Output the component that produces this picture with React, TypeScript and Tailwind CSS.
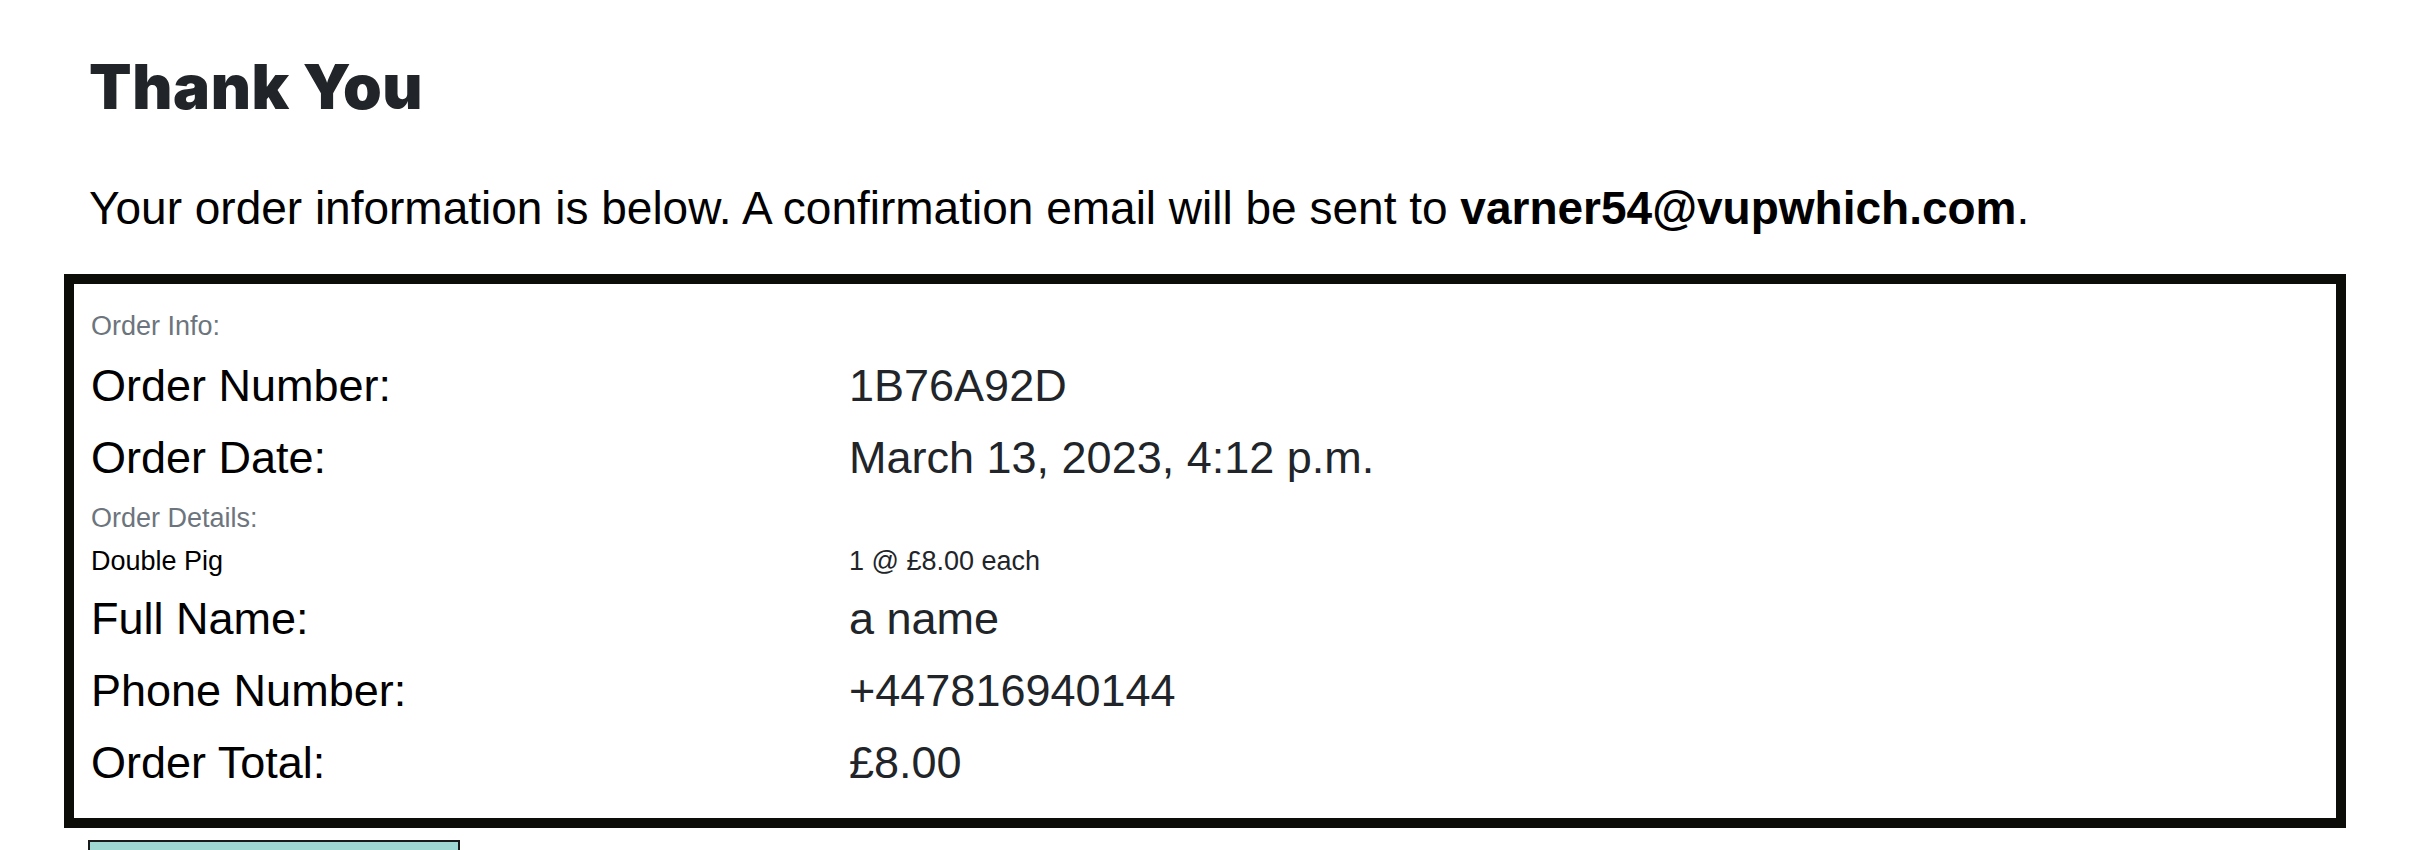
import React from "react";

const sans = { fontFamily: '"Liberation Sans", Arial, sans-serif' };

function BigRow({ label, value }: { label: string; value: string }) {
  return (
    <>
      <div className="h-[72px] text-[45px] leading-[72px] text-black">{label}</div>
      <div className="h-[72px] text-[45px] leading-[72px] text-[#212529]">{value}</div>
    </>
  );
}

function OrderBox() {
  return (
    <div className="mt-[39px] border-[10px] border-[#0c0d09] pt-[23px] pb-[19px] pl-[17px]">
      <div className="grid grid-cols-[758px_1fr]">
        <div className="col-span-2 mb-[5px] h-[38px] text-[27px] leading-[38px] text-[#6c757d]">
          Order Info:
        </div>
        <BigRow label="Order Number:" value="1B76A92D" />
        <BigRow label="Order Date:" value="March 13, 2023, 4:12 p.m." />
        <div className="col-span-2 mt-[5px] mb-[5px] h-[38px] text-[27px] leading-[38px] text-[#6c757d]">
          Order Details:
        </div>
        <div className="h-[41px] text-[27px] leading-[38px] text-black">Double Pig</div>
        <div className="h-[41px] text-[27px] leading-[38px] text-[#212529]">1 @ £8.00 each</div>
        <BigRow label="Full Name:" value="a name" />
        <BigRow label="Phone Number:" value="+447816940144" />
        <BigRow label="Order Total:" value="£8.00" />
      </div>
    </div>
  );
}

export default function App() {
  return (
    <div className="min-h-screen bg-white pr-[66px] pl-[64px] pt-[50px]" style={sans}>
      <h1
        className="h-[74px] pl-[25px] text-[62px] leading-[74px] font-black tracking-[0.01em] text-[#212529]"
        style={{ fontFamily: "Inter, sans-serif" }}
      >
        Thank You
      </h1>
      <p className="mt-[57px] h-[54px] pl-[25px] text-[46px] leading-[54px] text-black">
        Your order information is below. A confirmation email will be sent to{" "}
        <span className="font-bold">varner54@vupwhich.com</span>.
      </p>
      <OrderBox />
      <button
        aria-label="Continue"
        className="mt-[12px] ml-[24px] h-[70px] w-[372px] border-2 border-[#1a1a1a] bg-[#9fd8d2]"
      />
    </div>
  );
}
